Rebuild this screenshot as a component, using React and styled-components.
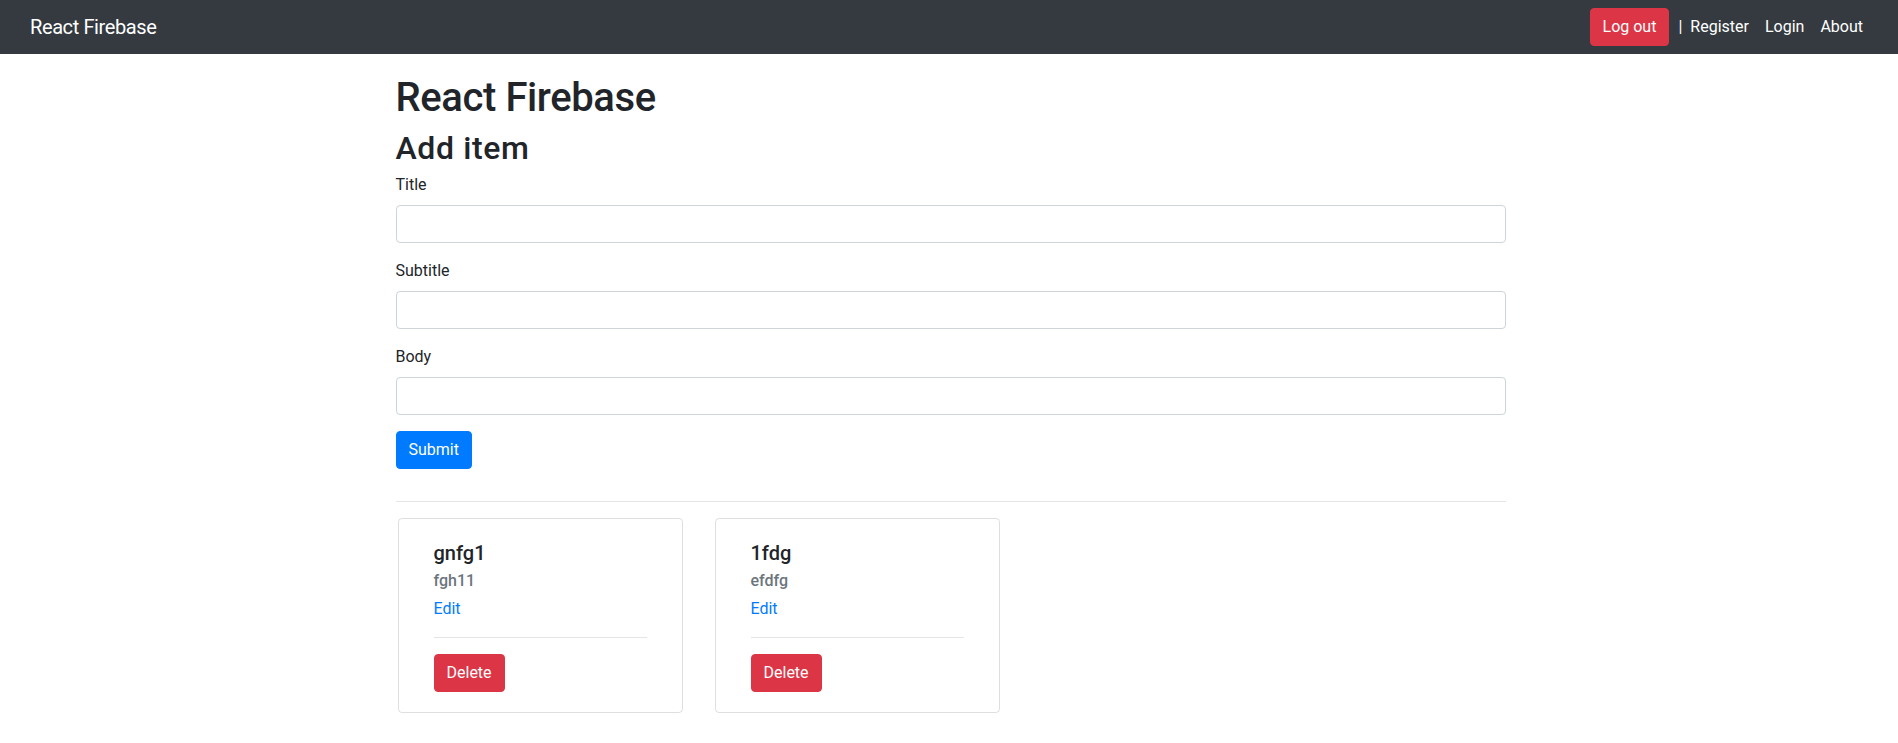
import React from "react";
import styled, { createGlobalStyle } from "styled-components";

const GlobalStyle = createGlobalStyle`
  *, *::before, *::after { box-sizing: border-box; }
  body {
    margin: 0;
    font-family: Roboto, "Liberation Sans", Arial, sans-serif;
    font-size: 16px;
    line-height: 1.5;
    color: #212529;
    background: #fff;
  }
`;

const Navbar = styled.nav`
  height: 54px;
  background: #343a40;
  display: flex;
  align-items: center;
  justify-content: space-between;
  padding: 0 27px 0 30px;
`;

const Brand = styled.a`
  color: #fff;
  font-size: 20px;
  line-height: 30px;
  letter-spacing: -0.4px;
  text-decoration: none;
`;

const NavRight = styled.div`
  display: flex;
  align-items: center;
`;

const Separator = styled.span`
  color: #fff;
  margin-left: 9px;
  line-height: 24px;
`;

const NavLink = styled.a`
  color: #fff;
  text-decoration: none;
  padding: 0 8px;
  line-height: 24px;
`;

const Button = styled.button`
  font-family: inherit;
  font-size: 16px;
  line-height: 24px;
  height: 38px;
  padding: 6px 12px;
  border-radius: 4px;
  border: 1px solid ${(p) => (p.$variant === "danger" ? "#dc3545" : "#007bff")};
  background: ${(p) => (p.$variant === "danger" ? "#dc3545" : "#007bff")};
  color: #fff;
  cursor: pointer;
`;

const Shift = styled.div`
  padding-left: 3px;
`;

const Container = styled.main`
  width: 1110px;
  margin: 0 auto;
  padding-top: 17px;
`;

const H1 = styled.h1`
  font-size: 40px;
  font-weight: 500;
  line-height: 1.2;
  letter-spacing: -0.4px;
  margin: 3px 0 0;
`;

const H2 = styled.h2`
  font-size: 32px;
  font-weight: 500;
  line-height: 1.2;
  letter-spacing: 0.6px;
  margin: 7px 0 6px;
`;

const Form = styled.form`
  display: flow-root;
`;

const FormGroup = styled.div`
  margin-bottom: 16px;
`;

const Label = styled.label`
  display: block;
  margin-bottom: 8px;
  line-height: 24px;
`;

const Input = styled.input`
  display: block;
  width: 100%;
  height: 38px;
  padding: 6px 12px;
  font-family: inherit;
  font-size: 16px;
  border: 1px solid #ced4da;
  border-radius: 4px;
  color: #495057;
  background: #fff;
`;

const Rule = styled.hr`
  border: 0;
  border-top: 1px solid rgba(0, 0, 0, 0.1);
  margin: 16px 0;
`;

const CardRow = styled.div`
  display: flex;
  gap: 32px;
  padding-left: 2px;
`;

const Card = styled.div`
  width: 285px;
  border: 1px solid rgba(0, 0, 0, 0.125);
  border-radius: 4px;
  padding: 20px 35px;
`;

const CardTitle = styled.h5`
  font-size: 20px;
  font-weight: 500;
  line-height: 1.2;
  padding-top: 2px;
  margin: 0 0 10px;
`;

const CardSubtitle = styled.h6`
  font-size: 16px;
  font-weight: 500;
  line-height: 1.2;
  color: #6c757d;
  padding-top: 2px;
  margin: -6px 0 6px;
`;

const CardLink = styled.a`
  display: block;
  color: #007bff;
  text-decoration: none;
  line-height: 24px;
`;

const items = [
  { id: 1, title: "gnfg1", subtitle: "fgh11" },
  { id: 2, title: "1fdg", subtitle: "efdfg" },
];

export default function App() {
  return (
    <>
      <GlobalStyle />
      <Navbar>
        <Brand href="#">React Firebase</Brand>
        <NavRight>
          <Button $variant="danger">Log out</Button>
          <Separator>|</Separator>
          <NavLink href="#">Register</NavLink>
          <NavLink href="#">Login</NavLink>
          <NavLink href="#">About</NavLink>
        </NavRight>
      </Navbar>
      <Shift>
        <Container>
          <H1>React Firebase</H1>
          <H2>Add item</H2>
          <Form onSubmit={(e) => e.preventDefault()}>
            <FormGroup>
              <Label>Title</Label>
              <Input type="text" />
            </FormGroup>
            <FormGroup>
              <Label>Subtitle</Label>
              <Input type="text" />
            </FormGroup>
            <FormGroup>
              <Label>Body</Label>
              <Input type="text" />
            </FormGroup>
            <FormGroup>
              <Button type="submit">Submit</Button>
            </FormGroup>
          </Form>
          <Rule />
          <CardRow>
            {items.map((it) => (
              <Card key={it.id}>
                <CardTitle>{it.title}</CardTitle>
                <CardSubtitle>{it.subtitle}</CardSubtitle>
                <CardLink href="#">Edit</CardLink>
                <Rule />
                <Button $variant="danger">Delete</Button>
              </Card>
            ))}
          </CardRow>
        </Container>
      </Shift>
    </>
  );
}
